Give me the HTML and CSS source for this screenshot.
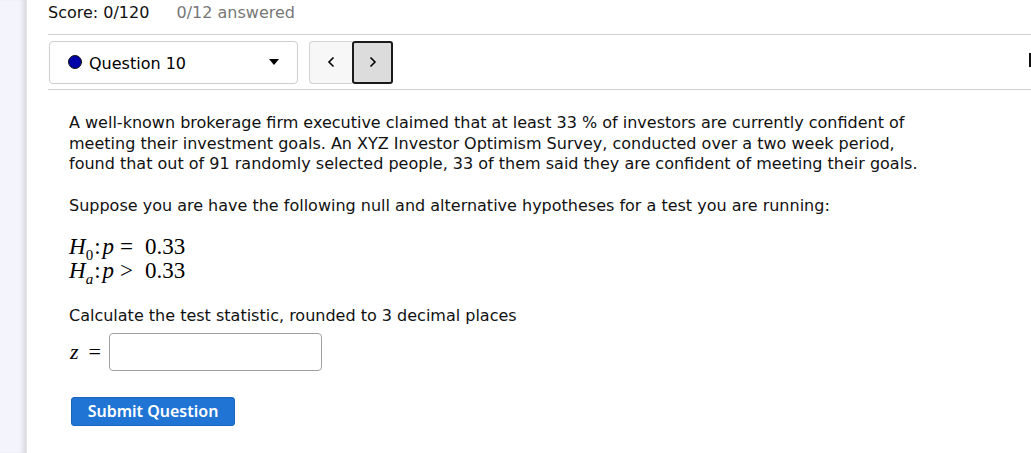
FILE: index.html
```html
<!DOCTYPE html>
<html>
<head>
<meta charset="utf-8">
<link rel="stylesheet" href="styles.css">
</head>
<body>
<div class="page">
  <aside class="sidebar"></aside>
  <main class="content">
    <div class="scorebar">
      <span class="score">Score: 0/120</span>
      <span class="answered">0/12 answered</span>
    </div>
    <div class="navrow">
      <div class="qselect">
        <span class="dot"></span>
        <span class="qlabel">Question 10</span>
        <span class="caret"></span>
      </div>
      <div class="navbtns">
        <button class="nav prev" aria-label="Previous"><svg width="8" height="12" viewBox="0 0 8 12"><polyline points="6.5,1.5 2,6 6.5,10.5" fill="none" stroke="#000" stroke-width="1.6"/></svg></button>
        <button class="nav next" aria-label="Next"><svg width="8" height="12" viewBox="0 0 8 12"><polyline points="1.5,1.5 6,6 1.5,10.5" fill="none" stroke="#000" stroke-width="1.6"/></svg></button>
      </div>
      <span class="edge"></span>
    </div>
    <div class="question">
      <p class="para">A well-known brokerage firm executive claimed that at least 33 % of investors are currently confident of<br>meeting their investment goals. An XYZ Investor Optimism Survey, conducted over a two week period,<br>found that out of 91 randomly selected people, 33 of them said they are confident of meeting their goals.</p>
      <p class="para">Suppose you are have the following null and alternative hypotheses for a test you are running:</p>
      <div class="math-block">
        <div class="mline"><i>H</i><sub>0</sub><span class="colon">:</span><i>p</i><span class="op">=</span>0.33</div>
        <div class="mline"><i>H</i><sub><i>a</i></sub><span class="colon">:</span><i>p</i><span class="op">&gt;</span>0.33</div>
      </div>
      <p class="para">Calculate the test statistic, rounded to 3 decimal places</p>
      <div class="answer">
        <span class="zlabel"><i>z</i><span class="zop">=</span></span>
        <input class="ansbox" type="text">
      </div>
      <button class="submit">Submit Question</button>
    </div>
  </main>
</div>
</body>
</html>
```
FILE: styles.css
```css
html, body {
  margin: 0;
  padding: 0;
  background: #ffffff;
}
body {
  font-family: "DejaVu Sans", "Noto Sans", sans-serif;
  color: #000;
  height: 453px;
  overflow: hidden;
}
.page {
  display: flex;
  height: 453px;
}
.sidebar {
  width: 26px;
  flex: none;
  background: #f4f5fc;
  box-shadow: inset -5px 0 4px -2px #d9d9de;
  border-right: 1px solid #e4e4e8;
}
.content {
  flex: 1;
  padding-left: 21px;
}
.scorebar {
  height: 35px;
  box-sizing: border-box;
  padding-top: 3px;
  border-bottom: 1px solid #d0d0d0;
  font-size: 16px;
  line-height: 20px;
}
.score {
  color: #111;
  margin-right: 22px;
}
.answered {
  color: #777;
}
.navrow {
  display: flex;
  align-items: center;
  height: 54px;
  border-bottom: 1px solid #d0d0d0;
  position: relative;
}
.qselect {
  margin-left: 1px;
  width: 249px;
  height: 43px;
  box-sizing: border-box;
  border: 1px solid #cfcfcf;
  border-radius: 4px;
  display: flex;
  align-items: center;
  padding-left: 18px;
  padding-right: 18px;
}
.dot {
  width: 14px;
  height: 14px;
  border-radius: 50%;
  background: #0000a8;
  border: 1px solid #111;
  box-sizing: border-box;
  margin-right: 7px;
}
.qlabel {
  flex: 1;
  font-size: 16px;
  padding-top: 2px;
}
.caret {
  width: 0;
  height: 0;
  border-left: 5px solid transparent;
  border-right: 5px solid transparent;
  border-top: 6px solid #000;
}
.navbtns {
  display: flex;
  margin-left: 11px;
  height: 43px;
}
.nav {
  width: 43px;
  height: 43px;
  padding: 0;
  display: flex;
  align-items: center;
  justify-content: center;
}
.prev {
  background: #f7f7f7;
  border: 1px solid #d2d2d2;
  border-right: none;
  border-radius: 4px 0 0 4px;
}
.next {
  width: 41px;
  background: #dcdcdc;
  border: 2px solid #1a1a1a;
  border-radius: 3px;
}
.edge {
  position: absolute;
  right: 0;
  top: 18px;
  width: 2px;
  height: 14px;
  background: #111;
}
.question {
  padding-left: 21px;
  padding-top: 23px;
}
.para {
  margin: 0 0 21px 0;
  font-size: 16px;
  line-height: 20.5px;
  color: #111;
}
.math-block {
  font-family: "Liberation Serif", "DejaVu Serif", serif;
  font-size: 23px;
  line-height: 24px;
  margin-top: -2px;
  margin-bottom: 23px;
}
.mline sub {
  font-size: 15px;
  line-height: 0;
}
.colon {
  margin: 0 2px 0 1px;
}
.op {
  margin: 0 12px 0 6px;
}
.answer {
  display: flex;
  align-items: center;
  margin-top: -15px;
}
.zlabel {
  font-family: "Liberation Serif", serif;
  font-size: 22px;
  margin-left: 1px;
  margin-right: 8px;
}
.zop {
  margin-left: 10px;
}
.ansbox {
  width: 213px;
  height: 38px;
  box-sizing: border-box;
  border: 1px solid #a0a0a0;
  border-radius: 4px;
  font-size: 16px;
}
.submit {
  margin-top: 26px;
  margin-left: 2px;
  width: 164px;
  height: 29px;
  background: #1f74d4;
  border: 1px solid #1a66bd;
  border-radius: 3px;
  color: #fff;
  font-family: "Noto Sans", sans-serif;
  font-size: 16px;
  font-weight: 600;
  padding: 0;
}
```
